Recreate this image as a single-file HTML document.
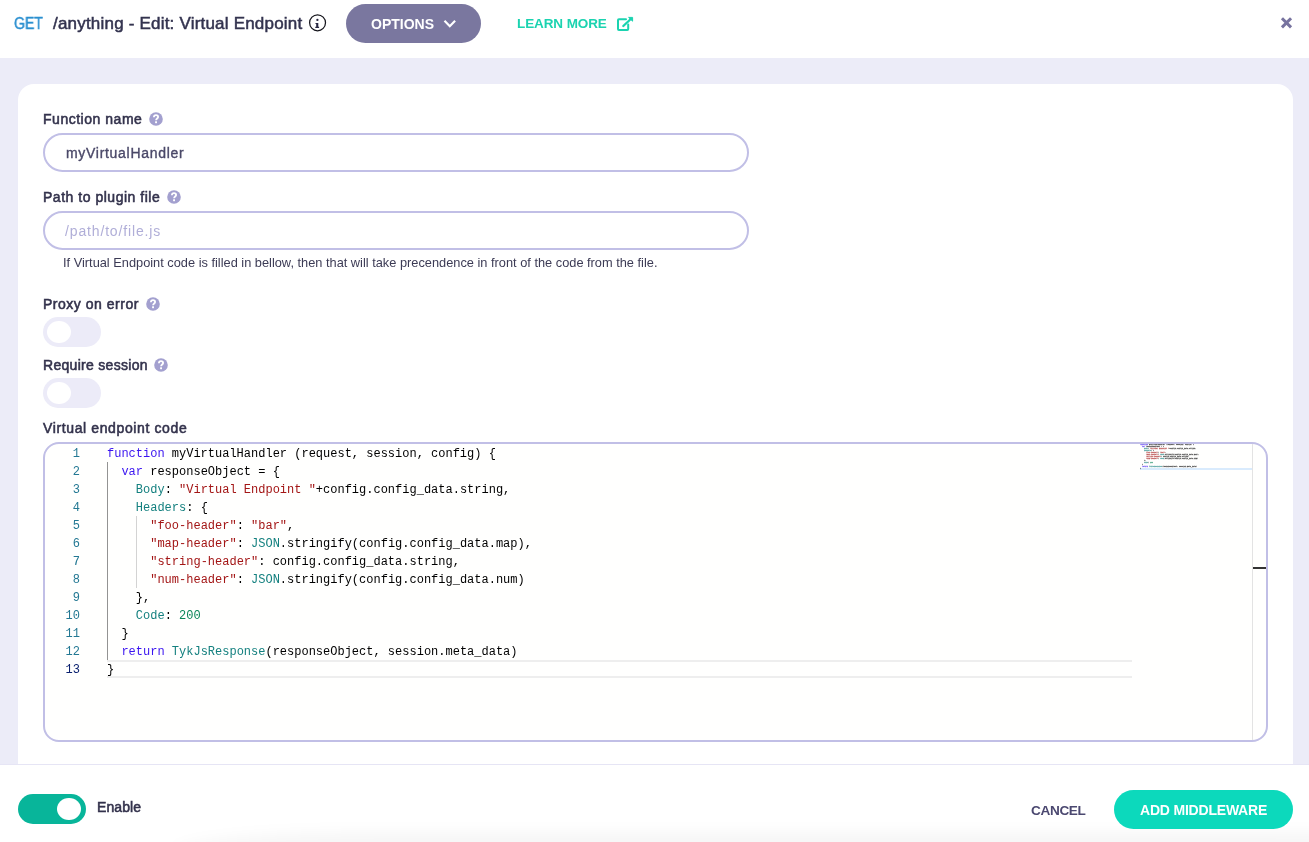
<!DOCTYPE html>
<html><head><meta charset="utf-8">
<style>
*{margin:0;padding:0;box-sizing:border-box}
html,body{width:1309px;height:842px;overflow:hidden;background:#fff;font-family:"Liberation Sans",sans-serif}
.a,.lbl,#code,#ln{will-change:transform}
.a{position:absolute;white-space:pre}
#hdr{position:absolute;left:0;top:0;width:1309px;height:58px;background:#fff}
#bg{position:absolute;left:0;top:58px;width:1309px;height:706px;background:#ECECF8}
#card{position:absolute;left:18px;top:84px;width:1275px;height:700px;background:#fff;border-radius:16px 16px 0 0}
.lbl{font-size:14px;color:#33324C;line-height:14px;letter-spacing:0.52px;-webkit-text-stroke:0.55px #33324C}
.help{position:absolute;width:14px;height:14px}
.help svg{position:absolute;left:0;top:0}
.inp{position:absolute;left:43px;width:706px;height:39px;border:2px solid #C1BFE6;border-radius:20px;background:#fff}
.tog{position:absolute;left:43px;width:58px;height:30px;border-radius:15px;background:#ECEBF8}
.tog i{position:absolute;left:3.8px;top:3.8px;width:24.2px;height:22.3px;border-radius:50%;background:#fff}
#foot{position:absolute;left:0;top:764px;width:1309px;height:78px;background:#fff;border-top:1px solid #E6E5F5}

#ed{position:absolute;left:43px;top:442px;width:1225px;height:300px;border:2px solid #C1BFE6;border-radius:16px;background:#FFFFFE;overflow:hidden}
#ln{position:absolute;left:0;top:1px;width:35px;font-family:"Liberation Mono",monospace;font-size:12px;line-height:18px;color:#237893;text-align:right}
#ln .cur{color:#0B216F}
#code{position:absolute;left:62px;top:1px;font-family:"Liberation Mono",monospace;font-size:12px;line-height:18px;color:#000;white-space:pre}
#code .k{color:#3A14F0}#code .s{color:#A31515}#code .t{color:#14807F}#code .n{color:#098658}
.curline{position:absolute;left:62px;top:216px;width:1025px;height:18px;border-top:2px solid #EEEEEE;border-bottom:2px solid #EEEEEE}
.guide{position:absolute;width:1px}
.g1{left:62px;top:18px;height:198px;background:#939393}
.g2{left:91px;top:72px;height:72px;background:#D3D3D3}
#mm{position:absolute;left:1095px;top:0}
#vsb{position:absolute;left:1207px;top:0;width:1px;height:296px;background:#E3E3E3}
#ovr{position:absolute;left:1208px;top:123px;width:13px;height:2px;background:#333}
#mmwrap{position:absolute;left:1095px;top:0;width:112px;height:30px;overflow:hidden}
#mmhl{position:absolute;left:0;top:24px;width:112px;height:2px;background:#D9EBFD}
#mmcode{position:absolute;left:0;top:-0.8px;font-family:"Liberation Mono",monospace;font-size:12px;line-height:10px;color:#000;white-space:pre;transform:scale(0.13889,0.2);transform-origin:0 0;-webkit-text-stroke:1.6px currentColor;opacity:0.65;will-change:transform}
#mmcode .k{color:#3A14F0}#mmcode .s{color:#A31515}#mmcode .t{color:#14807F}#mmcode .n{color:#098658}
</style></head><body>
<div id="hdr"></div>
<div id="bg"></div>
<div id="card"></div>

<!-- header -->
<div class="a" style="left:13.5px;top:16px;font-size:16px;line-height:16px;color:#2A8FD0;transform:scaleX(0.88);transform-origin:0 0;-webkit-text-stroke:0.5px #2A8FD0">GET</div>
<div class="a" style="left:53px;top:15px;font-size:17px;line-height:17px;color:#33334F;letter-spacing:0.2px;-webkit-text-stroke:0.5px #33334F">/anything - Edit: Virtual Endpoint</div>
<svg class="a" style="left:308px;top:14px" width="19" height="18" viewBox="0 0 19 18">
  <circle cx="9.55" cy="8.8" r="7.95" fill="none" stroke="#15151c" stroke-width="1.25"/>
  <circle cx="9.4" cy="5.95" r="1.15" fill="#262640"/>
  <path d="M7.5 8.9H10.3V12.7H11.1V13.9H7.3V12.7H8.2V10.1H7.5Z" fill="#262640"/>
</svg>
<div class="a" style="left:346px;top:4px;width:135px;height:39px;border-radius:20px;background:#7A779F"></div>
<div class="a" style="left:371px;top:17px;font-size:14px;line-height:14px;font-weight:bold;color:#fff">OPTIONS</div>
<svg class="a" style="left:443px;top:19px" width="14" height="10" viewBox="0 0 14 10"><path d="M1.5 1.8L6.8 7.2L12.1 1.8" fill="none" stroke="#fff" stroke-width="2.2"/></svg>
<div class="a" style="left:517px;top:16.8px;font-size:13.5px;line-height:14px;font-weight:bold;color:#1BD3B0;letter-spacing:-0.1px">LEARN MORE</div>
<svg class="a" style="left:615px;top:15px" width="20" height="18" viewBox="0 0 20 18">
  <path d="M11 4.3H3.9Q3 4.3 3 5.2V14Q3 14.9 3.9 14.9H12.3Q13.2 14.9 13.2 14V9.6" fill="none" stroke="#1BD3B0" stroke-width="2" stroke-linecap="round"/>
  <path d="M8.3 11L15.8 4" fill="none" stroke="#1BD3B0" stroke-width="2.3" stroke-linecap="round"/>
  <path d="M13.6 2.4H17.6V6.2Z" fill="#1BD3B0" stroke="#1BD3B0" stroke-width="1" stroke-linejoin="round"/>
</svg>
<svg class="a" style="left:1279px;top:15px" width="15" height="15" viewBox="0 0 15 15"><path d="M2.95 3.25L12.05 12.35M12.05 3.25L2.95 12.35" stroke="#77739F" stroke-width="3"/></svg>

<!-- form -->
<div class="a lbl" style="left:43px;top:112px">Function name</div>
<div class="help" style="left:149px;top:112px"><svg width="14" height="14" viewBox="0 0 14 14"><circle cx="7" cy="7" r="6.8" fill="#A3A0CF"/><path d="M4.9 5.3C4.9 3.9 5.9 3.2 7 3.2C8.2 3.2 9.1 4 9.1 5C9.1 6.5 7.1 6.6 7.1 8.3" fill="none" stroke="#fff" stroke-width="1.8"/><rect x="6.1" y="9.3" width="1.9" height="1.9" fill="#fff"/></svg></div>
<div class="inp" style="top:133px"></div>
<div class="a" style="left:65.5px;top:146px;font-size:14px;line-height:14px;color:#4A4868;letter-spacing:0.7px;-webkit-text-stroke:0.35px #4A4868">myVirtualHandler</div>

<div class="a lbl" style="left:43px;top:190px">Path to plugin file</div>
<div class="help" style="left:167px;top:190px"><svg width="14" height="14" viewBox="0 0 14 14"><circle cx="7" cy="7" r="6.8" fill="#A3A0CF"/><path d="M4.9 5.3C4.9 3.9 5.9 3.2 7 3.2C8.2 3.2 9.1 4 9.1 5C9.1 6.5 7.1 6.6 7.1 8.3" fill="none" stroke="#fff" stroke-width="1.8"/><rect x="6.1" y="9.3" width="1.9" height="1.9" fill="#fff"/></svg></div>
<div class="inp" style="top:211px"></div>
<div class="a" style="left:65px;top:224px;font-size:14px;line-height:14px;color:#B0AED8;letter-spacing:0.85px">/path/to/file.js</div>
<div class="a" style="left:63px;top:256px;font-size:12.8px;line-height:13px;color:#3C3B55">If Virtual Endpoint code is filled in bellow, then that will take precendence in front of the code from the file.</div>

<div class="a lbl" style="left:43px;top:297px">Proxy on error</div>
<div class="help" style="left:146px;top:297px"><svg width="14" height="14" viewBox="0 0 14 14"><circle cx="7" cy="7" r="6.8" fill="#A3A0CF"/><path d="M4.9 5.3C4.9 3.9 5.9 3.2 7 3.2C8.2 3.2 9.1 4 9.1 5C9.1 6.5 7.1 6.6 7.1 8.3" fill="none" stroke="#fff" stroke-width="1.8"/><rect x="6.1" y="9.3" width="1.9" height="1.9" fill="#fff"/></svg></div>
<div class="tog" style="top:317px"><i></i></div>

<div class="a lbl" style="left:43px;top:358px;letter-spacing:0.3px">Require session</div>
<div class="help" style="left:154px;top:358px"><svg width="14" height="14" viewBox="0 0 14 14"><circle cx="7" cy="7" r="6.8" fill="#A3A0CF"/><path d="M4.9 5.3C4.9 3.9 5.9 3.2 7 3.2C8.2 3.2 9.1 4 9.1 5C9.1 6.5 7.1 6.6 7.1 8.3" fill="none" stroke="#fff" stroke-width="1.8"/><rect x="6.1" y="9.3" width="1.9" height="1.9" fill="#fff"/></svg></div>
<div class="tog" style="top:378px"><i></i></div>

<div class="a lbl" style="left:43px;top:421px;letter-spacing:0.62px">Virtual endpoint code</div>

<div id="ed">
<div id="ln">
<div>1</div>
<div>2</div>
<div>3</div>
<div>4</div>
<div>5</div>
<div>6</div>
<div>7</div>
<div>8</div>
<div>9</div>
<div>10</div>
<div>11</div>
<div>12</div>
<div class="cur">13</div>
</div>
<div class="curline"></div>
<div class="guide g1"></div><div class="guide g2"></div>
<div id="code"><div><span class="k">function</span> myVirtualHandler (request, session, config) {</div><div>  <span class="k">var</span> responseObject = {</div><div>    <span class="t">Body</span>: <span class="s">&quot;Virtual Endpoint &quot;</span>+config.config_data.string,</div><div>    <span class="t">Headers</span>: {</div><div>      <span class="s">&quot;foo-header&quot;</span>: <span class="s">&quot;bar&quot;</span>,</div><div>      <span class="s">&quot;map-header&quot;</span>: <span class="t">JSON</span>.stringify(config.config_data.map),</div><div>      <span class="s">&quot;string-header&quot;</span>: config.config_data.string,</div><div>      <span class="s">&quot;num-header&quot;</span>: <span class="t">JSON</span>.stringify(config.config_data.num)</div><div>    },</div><div>    <span class="t">Code</span>: <span class="n">200</span></div><div>  }</div><div>  <span class="k">return</span> <span class="t">TykJsResponse</span>(responseObject, session.meta_data)</div><div>}</div></div>
<div id="mmwrap"><div id="mmhl"></div><div id="mmcode"><div><span class="k">function</span> myVirtualHandler (request, session, config) {</div><div>  <span class="k">var</span> responseObject = {</div><div>    <span class="t">Body</span>: <span class="s">&quot;Virtual Endpoint &quot;</span>+config.config_data.string,</div><div>    <span class="t">Headers</span>: {</div><div>      <span class="s">&quot;foo-header&quot;</span>: <span class="s">&quot;bar&quot;</span>,</div><div>      <span class="s">&quot;map-header&quot;</span>: <span class="t">JSON</span>.stringify(config.config_data.map),</div><div>      <span class="s">&quot;string-header&quot;</span>: config.config_data.string,</div><div>      <span class="s">&quot;num-header&quot;</span>: <span class="t">JSON</span>.stringify(config.config_data.num)</div><div>    },</div><div>    <span class="t">Code</span>: <span class="n">200</span></div><div>  }</div><div>  <span class="k">return</span> <span class="t">TykJsResponse</span>(responseObject, session.meta_data)</div><div>}</div></div></div>
<div id="vsb"></div><div id="ovr"></div>
</div>

<!-- footer -->
<div id="foot"></div>
<div class="a" style="left:18px;top:794px;width:68px;height:30px;border-radius:15px;background:#08B59A"></div>
<div class="a" style="left:57px;top:797.8px;width:24px;height:22.3px;border-radius:50%;background:#fff"></div>
<div class="a" style="left:97px;top:800px;font-size:14px;line-height:14px;color:#33324C;letter-spacing:0.1px;-webkit-text-stroke:0.55px #33324C">Enable</div>
<div class="a" style="left:1030.5px;top:804px;font-size:13.6px;line-height:14px;font-weight:bold;color:#4B4870;letter-spacing:-0.35px">CANCEL</div>
<div class="a" style="left:175px;top:832px;width:1300px;height:40px;border-radius:400px/40px;background:rgba(0,0,0,0.035);filter:blur(7px)"></div>
<div class="a" style="left:1114px;top:790px;width:179px;height:38.5px;border-radius:19.5px;background:#0CD9BC"></div>
<div class="a" style="left:1140px;top:803px;font-size:14px;line-height:14px;font-weight:bold;color:#fff;letter-spacing:-0.2px">ADD MIDDLEWARE</div>
</body></html>
